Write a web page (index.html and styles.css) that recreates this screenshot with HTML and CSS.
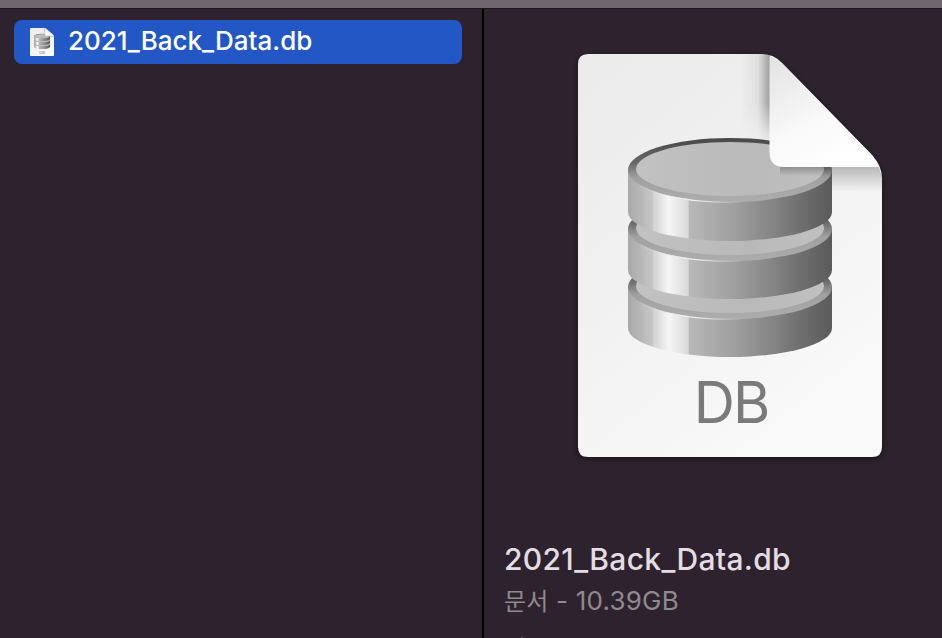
FILE: index.html
```html
<!DOCTYPE html>
<html lang="ko">
<head>
<meta charset="utf-8">
<title>2021_Back_Data.db</title>
<link rel="stylesheet" href="styles.css">
</head>
<body>
<div class="topbar"></div>
<main class="panes">
  <section class="list">
    <div class="row">
      <svg class="row-icon" viewBox="578 54 304 403" preserveAspectRatio="none" aria-hidden="true"><use href="#dbdoc"/></svg>
      <span class="row-name">2021_Back_Data.db</span>
    </div>
  </section>
  <section class="preview">
    <svg class="doc" viewBox="570 46 320 424" aria-hidden="true">
      <defs>
        <linearGradient id="paper" x1="0" y1="0" x2="0.6" y2="1">
          <stop offset="0" stop-color="#ebebeb"/><stop offset="0.5" stop-color="#f1f1f1"/><stop offset="1" stop-color="#f9f9f9"/>
        </linearGradient>
        <linearGradient id="foldshade" x1="0" y1="0" x2="1" y2="0">
          <stop offset="0" stop-color="#000" stop-opacity="0"/><stop offset="0.6" stop-color="#000" stop-opacity="0.06"/><stop offset="1" stop-color="#000" stop-opacity="0.34"/>
        </linearGradient>
        <linearGradient id="foldfade" x1="0" y1="0" x2="0" y2="1">
          <stop offset="0" stop-color="#fff"/><stop offset="0.55" stop-color="#fff"/><stop offset="1" stop-color="#000"/>
        </linearGradient>
        <mask id="foldmask" maskUnits="userSpaceOnUse" x="740" y="54" width="30" height="90">
          <rect x="740" y="54" width="30" height="90" fill="url(#foldfade)"/>
        </mask>
        <linearGradient id="undershade" x1="0" y1="0" x2="0" y2="1">
          <stop offset="0" stop-color="#000" stop-opacity="0.24"/><stop offset="1" stop-color="#000" stop-opacity="0"/>
        </linearGradient>
        <linearGradient id="fold" x1="0" y1="0" x2="0.55" y2="1">
          <stop offset="0" stop-color="#e2e2e2"/><stop offset="0.6" stop-color="#f8f8f8"/><stop offset="1" stop-color="#ffffff"/>
        </linearGradient>
        <linearGradient id="side" gradientUnits="userSpaceOnUse" x1="628" y1="0" x2="832" y2="0">
          <stop offset="0" stop-color="#a8a8a8"/><stop offset="0.12" stop-color="#c6c6c6"/><stop offset="0.125" stop-color="#d2d2d2"/>
          <stop offset="0.2" stop-color="#f6f6f6"/><stop offset="0.295" stop-color="#d8d8d8"/><stop offset="0.3" stop-color="#b8b8b8"/>
          <stop offset="0.55" stop-color="#9c9c9c"/><stop offset="0.8" stop-color="#767676"/><stop offset="1" stop-color="#5a5a5a"/>
        </linearGradient>
        <linearGradient id="rim" x1="0" y1="0" x2="0" y2="1">
          <stop offset="0" stop-color="#484848"/><stop offset="0.4" stop-color="#6a6a6a"/><stop offset="0.62" stop-color="#a0a0a0"/><stop offset="1" stop-color="#adadad"/>
        </linearGradient>
        <linearGradient id="top" x1="0" y1="0" x2="1" y2="0">
          <stop offset="0" stop-color="#c2c2c2"/><stop offset="0.6" stop-color="#b9b9b9"/><stop offset="1" stop-color="#c0c0c0"/>
        </linearGradient>
        <linearGradient id="glint" gradientUnits="userSpaceOnUse" x1="640" y1="0" x2="745" y2="0">
          <stop offset="0" stop-color="#e8e8e8" stop-opacity="0.2"/><stop offset="0.5" stop-color="#efefef"/><stop offset="1" stop-color="#e8e8e8" stop-opacity="0"/>
        </linearGradient>
        <filter id="docshadow" x="-5%" y="-5%" width="110%" height="110%">
          <feDropShadow dx="0" dy="2" stdDeviation="3" flood-color="#000" flood-opacity="0.45"/>
        </filter>
        <g id="disc3">
          <path d="M628 287V328A102 29 0 0 0 832 328V287Z" fill="url(#side)"/>
          <ellipse cx="730" cy="287" rx="102" ry="32" fill="url(#rim)"/>
          <ellipse cx="730" cy="286" rx="94" ry="27" fill="url(#top)"/>
          <path class="glint" d="M640 302.5A102 32 0 0 0 740 319.3"/>
        </g>
        <g id="disc2">
          <path d="M628 229V270A102 29 0 0 0 832 270V229Z" fill="url(#side)"/>
          <ellipse cx="730" cy="229" rx="102" ry="32" fill="url(#rim)"/>
          <ellipse cx="730" cy="228" rx="94" ry="27" fill="url(#top)"/>
          <path class="glint" d="M640 244.5A102 32 0 0 0 740 261.3"/>
        </g>
        <g id="disc1">
          <path d="M628 170V212A102 29 0 0 0 832 212V170Z" fill="url(#side)"/>
          <ellipse cx="730" cy="170" rx="102" ry="32" fill="url(#rim)"/>
          <ellipse cx="730" cy="169" rx="94" ry="27" fill="url(#top)"/>
          <path class="glint" d="M640 185.5A102 32 0 0 0 740 202.3"/>
        </g>
        <path id="sheet" d="M588 54H762Q774 54 782 63L872 155Q882 166 882 178V447Q882 457 872 457H588Q578 457 578 447V64Q578 54 588 54Z"/>
        <g id="dbdoc">
          <use href="#sheet" fill="url(#paper)"/>
          <rect x="740" y="54" width="30" height="90" fill="url(#foldshade)" mask="url(#foldmask)"/>
          <use href="#disc3"/>
          <use href="#disc2"/>
          <use href="#disc1"/>
          <path d="M832 167H879L882 178V192H832Z" fill="url(#undershade)"/>
          <path d="M780 167H832V176H780Z" fill="url(#undershade)"/>
          <path d="M769.5 57Q776 58 782 63L872 155Q875 159 877 167H784Q769.5 167 769.5 152Z" fill="url(#fold)"/>
          <text class="doc-label" x="731" y="423">DB</text>
        </g>
      </defs>
      <use href="#sheet" fill="#000" filter="url(#docshadow)"/>
      <use href="#dbdoc"/>
    </svg>
    <h1 class="file-name">2021_Back_Data.db</h1>
    <p class="file-meta"><span class="file-kind">문서</span> - 10.39GB</p>
    <h2 class="info-head">정보</h2>
  </section>
</main>
</body>
</html>
```

FILE: styles.css
```css
html, body {
  margin: 0;
  height: 100%;
  overflow: hidden;
  background: #2d222d;
}

body {
  display: flex;
  flex-direction: column;
  font-family: Inter, "Noto Sans CJK KR", sans-serif;
}

.topbar {
  flex: none;
  height: 8px;
  background: #6c676c;
  border-bottom: 1px solid #1b171b;
}

.panes {
  flex: 1;
  min-height: 0;
  display: flex;
}

.list {
  flex: none;
  width: 448px;
  padding: 11px 20px 0 14px;
  border-right: 2px solid #000;
}

.row {
  height: 44px;
  display: flex;
  align-items: center;
  gap: 14px;
  padding-left: 16px;
  border-radius: 8px;
  background: #2357c6;
}

.row-icon {
  flex: none;
  width: 24px;
  height: 28px;
}

.row-name {
  padding-bottom: 2px;
  font-size: 26px;
  line-height: 1;
  font-weight: 500;
  color: #fff;
}

.preview {
  flex: 1;
  min-width: 0;
  overflow: hidden;
  padding: 37px 0 0 20px;
}

.doc {
  display: block;
  width: 320px;
  height: 424px;
  margin-left: 66px;
}

.glint {
  fill: none;
  stroke: url(#glint);
  stroke-width: 1.2;
}

.doc-label {
  font-family: Inter, sans-serif;
  font-size: 57px;
  font-weight: 400;
  letter-spacing: -2px;
  fill: #7a7a7a;
  text-anchor: middle;
}

.file-name {
  margin: 72px 0 0;
  font-size: 30px;
  line-height: 34px;
  font-weight: 500;
  letter-spacing: 0.3px;
  color: #e3dee3;
}

.file-meta {
  margin: 10px 0 0;
  font-size: 26px;
  line-height: 30px;
  letter-spacing: 0.2px;
  color: #8f8a8f;
}

.file-kind {
  font-size: 24px;
}

.info-head {
  margin: 18px 0 0;
  font-size: 24px;
  line-height: 30px;
  font-weight: 400;
  color: #e6e1e6;
}
```
